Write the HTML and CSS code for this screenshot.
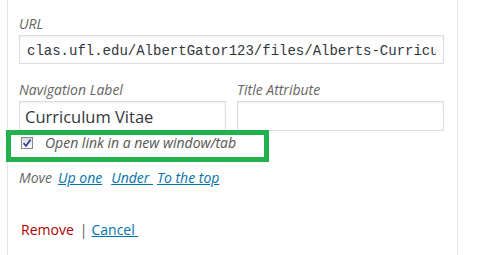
FILE: index.html
```html
<!DOCTYPE html>
<html>
<head>
<meta charset="utf-8">
<link rel="stylesheet" href="styles.css">
</head>
<body>
<div class="panel">
  <label class="field">
    <span class="label">URL</span>
    <input class="input url" type="text" value="clas.ufl.edu/AlbertGator123/files/Alberts-Curriculum-Vitae.pdf">
  </label>
  <div class="row">
    <label class="field half">
      <span class="label">Navigation Label</span>
      <input class="input" type="text" value="Curriculum Vitae">
    </label>
    <label class="field half">
      <span class="label">Title Attribute</span>
      <input class="input" type="text" value="">
    </label>
  </div>
  <div class="check-row">
    <span class="checkbox">
      <svg width="10" height="10" viewBox="0 0 10 10"><path d="M1.5 5.2 L4 7.8 L8.6 1.6" fill="none" stroke="#3346a8" stroke-width="1.8"/></svg>
    </span>
    <span class="check-label">Open link in a new window/tab</span>
    <span class="highlight"></span>
  </div>
  <div class="move-row">
    <span class="move">Move</span>
    <a class="link up">Up one</a>
    <a class="link under">Under&nbsp;</a>
    <a class="link">To the top</a>
  </div>
  <div class="actions">
    <a class="remove">Remove</a>
    <span class="sep">|</span>
    <a class="link cancel">Cancel&nbsp;</a>
  </div>
</div>
</body>
</html>
```
FILE: styles.css
```css
html, body {
  margin: 0;
  padding: 0;
  background: #fff;
  height: 255px;
  overflow: hidden;
}
body {
  font-family: "Open Sans", "Liberation Sans", sans-serif;
  font-size: 14px;
  color: #444;
}
.panel {
  margin-left: 7px;
  width: 451px;
  height: 255px;
  box-sizing: border-box;
  border-left: 1px solid #e5e5e5;
  border-right: 1px solid #e5e5e5;
  padding: 14px 13px 0 11px;
}
.field {
  display: flex;
  flex-direction: column;
}
.label {
  font-style: italic;
  color: #666;
  line-height: 19px;
  margin-bottom: 2px;
}
.input {
  box-sizing: border-box;
  border: 1px solid #ddd;
  box-shadow: inset 0 1px 2px rgba(0,0,0,0.07);
  background: #fff;
  color: #32373c;
  font-family: "Open Sans", "Liberation Sans", sans-serif;
  font-size: 16.5px;
  padding: 0 5px;
  height: 30px;
  margin: 0;
  outline: none;
}
.input.url {
  font-family: "Liberation Mono", "DejaVu Sans Mono", monospace;
  font-size: 14px;
  height: 29px;
  padding: 2px 7px 0;
}
.row {
  display: flex;
  gap: 11px;
  margin-top: 16px;
}
.half {
  width: 207px;
}
.check-row {
  position: relative;
  display: flex;
  align-items: center;
  height: 19px;
  margin-top: 2px;
  padding-left: 2px;
}
.checkbox {
  box-sizing: border-box;
  width: 12px;
  height: 12px;
  border: 1px solid #8a8a8a;
  background: linear-gradient(#dcdcdc, #fbfbfb);
  display: flex;
  align-items: center;
  justify-content: center;
  margin-right: 12px;
}
.checkbox svg {
  display: block;
}
.check-label {
  font-style: italic;
  color: #555;
  line-height: 19px;
}
.highlight {
  position: absolute;
  left: -13px;
  top: -3px;
  width: 263px;
  height: 32px;
  box-sizing: border-box;
  border: 5px solid #22b14c;
}
.move-row {
  display: flex;
  align-items: baseline;
  margin-top: 16px;
  line-height: 19px;
}
.move {
  font-style: italic;
  color: #666;
  margin-right: 6px;
}
.link {
  color: #0073aa;
  text-decoration: underline;
  font-style: italic;
}
.up { margin-right: 9px; }
.under { margin-right: 4px; }
.actions {
  display: flex;
  align-items: baseline;
  margin-top: 33px;
  line-height: 19px;
  padding-left: 2px;
}
.remove {
  color: #a00;
}
.sep {
  color: #555;
  margin: 0 4px 0 6px;
}
.cancel {
  font-style: normal;
}
```
